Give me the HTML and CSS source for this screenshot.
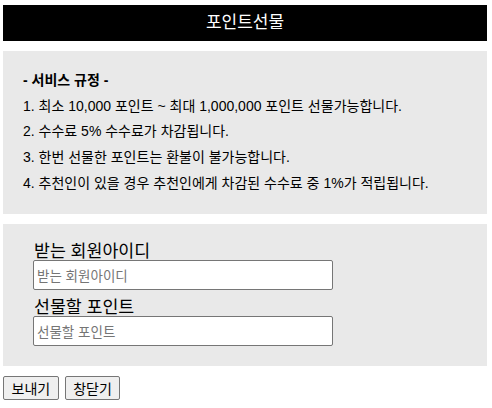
FILE: index.html
```html
<!DOCTYPE html>
<html lang="ko">
<head>
<meta charset="utf-8">
<title>포인트선물</title>
<link rel="stylesheet" href="styles.css">
</head>
<body>
<div class="page">
  <div class="header">포인트선물</div>
  <div class="rules">
    <div class="rule-title">- 서비스 규정 -</div>
    <div class="rule">1. 최소 10,000 포인트 ~ 최대 1,000,000 포인트 선물가능합니다.</div>
    <div class="rule">2. 수수료 5% 수수료가 차감됩니다.</div>
    <div class="rule">3. 한번 선물한 포인트는 환불이 불가능합니다.</div>
    <div class="rule">4. 추천인이 있을 경우 추천인에게 차감된 수수료 중 1%가 적립됩니다.</div>
  </div>
  <div class="form-box">
    <label class="field-label" for="rid">받는 회원아이디</label>
    <input class="field-input" id="rid" type="text" placeholder="받는 회원아이디">
    <label class="field-label second" for="pts">선물할 포인트</label>
    <input class="field-input" id="pts" type="text" placeholder="선물할 포인트">
  </div>
  <div class="actions">
    <button class="btn" type="button">보내기</button>
    <button class="btn" type="button">창닫기</button>
  </div>
</div>
</body>
</html>
```
FILE: styles.css
```css
html, body {
  margin: 0;
  padding: 0;
  background: #ffffff;
}
body {
  font-family: "Liberation Sans", "Noto Sans CJK KR", sans-serif;
  color: #000;
}
.page {
  padding: 5px 5px 0 3px;
  display: flex;
  flex-direction: column;
  gap: 10px;
}
.header {
  background: #000;
  color: #fff;
  height: 36px;
  line-height: 36px;
  text-align: center;
  font-size: 17px;
}
.rules {
  background: #e9e9e9;
  padding: 17px 20px;
  font-size: 14px;
  line-height: 25.7px;
}
.rule-title {
  font-weight: bold;
}
.form-box {
  background: #e9e9e9;
  padding: 18px 30px 20px 30px;
  display: flex;
  flex-direction: column;
  align-items: flex-start;
}
.field-label {
  font-size: 17.3px;
  line-height: 18px;
  padding-left: 1px;
}
.field-label.second {
  margin-top: 8px;
}
.field-input {
  box-sizing: border-box;
  width: 300px;
  height: 30px;
  margin: 0;
  border: 1px solid #767676;
  border-radius: 2px;
  padding: 0 3px;
  font-family: "Noto Sans CJK KR", "Liberation Sans", sans-serif;
  font-size: 13.5px;
  background: #fff;
}
.field-input::placeholder {
  color: #757575;
}
.actions {
  display: flex;
  gap: 6px;
}
.btn {
  box-sizing: border-box;
  height: 24px;
  padding: 0 7.5px;
  border: 1px solid #767676;
  border-radius: 2px;
  background: #efefef;
  font-family: "Liberation Sans", "Noto Sans CJK KR", sans-serif;
  font-size: 14px;
  color: #000;
}
```
